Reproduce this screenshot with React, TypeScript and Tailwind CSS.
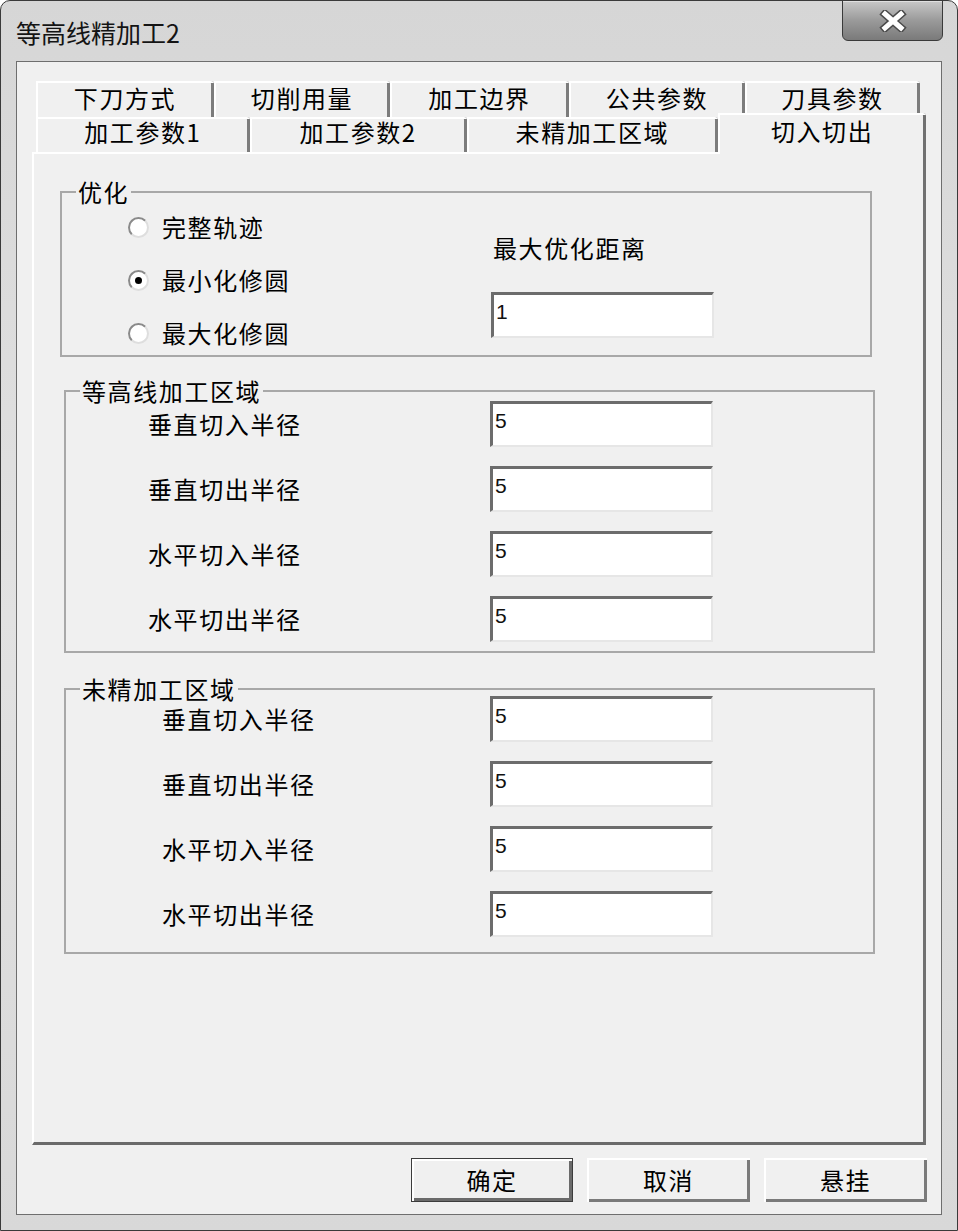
import React from 'react'

const cjk = '[font-family:"Noto_Sans_CJK_SC","Noto_Sans",sans-serif]'

// back row and front row of the tab strip
const backTabs = [
  { label: '下刀方式', w: 'w-[178px]' },
  { label: '切削用量', w: 'w-[176px]' },
  { label: '加工边界', w: 'w-[179px]' },
  { label: '公共参数', w: 'w-[176px]' },
  { label: '刀具参数', w: 'w-[175px]' },
]

const frontTabs = [
  { label: '加工参数1', w: 'w-[214px]' },
  { label: '加工参数2', w: 'w-[217px]' },
  { label: '未精加工区域', w: 'w-[252px]' },
]

const contourRows = ['垂直切入半径', '垂直切出半径', '水平切入半径', '水平切出半径']

function CloseIcon() {
  return (
    <svg width="32" height="22" viewBox="0 0 32 22">
      <path d="M8 4 L24 18 M24 4 L8 18" stroke="#4a4a4a" strokeWidth="8" strokeLinecap="square" />
      <path d="M8 4 L24 18 M24 4 L8 18" stroke="#ffffff" strokeWidth="5" strokeLinecap="square" />
    </svg>
  )
}

function Radio({ checked, label }: { checked?: boolean; label: string }) {
  return (
    <div className="flex items-center gap-[13px] h-[26px]">
      <div className="w-[21px] h-[21px] rounded-full bg-white border-2 border-t-[#8a8a8a] border-l-[#8a8a8a] border-r-[#dedede] border-b-[#dedede] flex items-center justify-center">
        {checked && <div className="w-[7px] h-[7px] rounded-full bg-black" />}
      </div>
      <span className="text-[24px] leading-[26px] tracking-[1.6px] text-black">{label}</span>
    </div>
  )
}

function Field({ value }: { value: string }) {
  return (
    <div className="w-[223px] h-[46px] bg-white border-t-[3px] border-l-[3px] border-t-[#6c6c6c] border-l-[#6c6c6c] border-r-2 border-b-2 border-r-[#e6e6e6] border-b-[#e6e6e6] pl-[2px] pt-[6px]">
      <span className="block text-[21px] leading-[21px] text-[#111] [font-family:'Liberation_Sans',sans-serif]">{value}</span>
    </div>
  )
}

function Legend({ children }: { children: React.ReactNode }) {
  return (
    <legend className="ml-[14px] px-[2px] text-[24px] leading-[26px] tracking-[1.6px] text-black">{children}</legend>
  )
}

function Button({ label, primary }: { label: string; primary?: boolean }) {
  return (
    <button
      className={
        'h-[44px] bg-[#f0f0f0] text-[24px] leading-none tracking-[1.6px] text-black flex items-center justify-center ' +
        (primary
          ? 'w-[162px] border border-[#3c3c3c] shadow-[inset_2px_2px_0_#ffffff,inset_-3px_-3px_0_#6a6a6a]'
          : 'w-[163px] shadow-[inset_2px_2px_0_#ffffff,inset_-3px_-3px_0_#7a7a7a]')
      }
    >
      {label}
    </button>
  )
}

export default function App() {
  return (
    <div className={`w-[958px] h-[1231px] bg-white ${cjk}`}>
      <div className="h-full flex flex-col rounded-t-[10px] border border-[#3a3a3a] bg-gradient-to-b from-[#d6d6d6] via-[#e2e2e2] to-[#d8d8d8]">
        {/* Title bar */}
        <div className="h-[60px] flex justify-between">
          <div className="pl-[15px] pt-[17px] text-[25px] leading-[28px] text-[#141414]">等高线精加工2</div>
          <div className="mr-[14px] -mt-px w-[101px] h-[41px] rounded-b-[6px] border border-[#3a3a3a] bg-gradient-to-b from-[#c8c8c8] via-[#9a9a9a] to-[#7a7a7a] flex items-center justify-center shadow-[inset_0_1px_0_#e0e0e0]">
            <CloseIcon />
          </div>
        </div>

        {/* Client area */}
        <div className="flex-1 mx-[15px] mb-[15px] border border-[#6e6e6e] bg-[#f0f0f0] flex flex-col">
          <div className="flex-1 flex flex-col mx-[15px] mt-[19px]">
            {/* Tabs */}
            <div className="pl-[4px]">
              <div className="flex h-[36px]">
                {backTabs.map((t) => (
                  <div
                    key={t.label}
                    className={`${t.w} h-full pb-[3px] flex items-center justify-center text-[24px] leading-none tracking-[1.6px] text-black bg-[#f0f0f0] rounded-tr-[3px] shadow-[inset_2px_2px_0_#ffffff,inset_-3px_0_0_#7c7c7c]`}
                  >
                    {t.label}
                  </div>
                ))}
              </div>
              <div className="flex h-[35px]">
                {frontTabs.map((t) => (
                  <div
                    key={t.label}
                    className={`${t.w} h-full pb-[6px] flex items-center justify-center text-[24px] leading-none tracking-[1.6px] text-black bg-[#f0f0f0] rounded-tr-[3px] shadow-[inset_2px_2px_0_#ffffff,inset_-3px_0_0_#7c7c7c]`}
                  >
                    {t.label}
                  </div>
                ))}
                <div className="relative z-10 self-end -mb-[2px] w-[208px] h-[41px] pb-[5px] flex items-center justify-center text-[24px] leading-none tracking-[1.6px] text-black bg-[#f0f0f0] rounded-tr-[3px] shadow-[inset_2px_2px_0_#ffffff,inset_-3px_0_0_#707070]">
                  切入切出
                </div>
              </div>
            </div>

            {/* Tab page */}
            <div className="flex-1 border-t-2 border-l-2 border-t-white border-l-white border-r-[3px] border-b-[3px] border-r-[#707070] border-b-[#6a6a6a]">
              {/* 优化 */}
              <fieldset className="mt-[25px] ml-[26px] mr-[51px] border-2 border-[#a8a8a8]">
                <Legend>优化</Legend>
                <div className="flex">
                  <div className="w-[429px] pl-[66px] pt-[9px] pb-[9px] flex flex-col gap-[27px]">
                    <Radio label="完整轨迹" />
                    <Radio label="最小化修圆" checked />
                    <Radio label="最大化修圆" />
                  </div>
                  <div className="pt-[30px] flex flex-col gap-[31px]">
                    <span className="pl-[2px] text-[24px] leading-[26px] tracking-[1.6px] text-black">最大优化距离</span>
                    <Field value="1" />
                  </div>
                </div>
              </fieldset>

              {/* 等高线加工区域 */}
              <fieldset className="mt-[21px] ml-[30px] mr-[48px] border-2 border-[#a8a8a8]">
                <Legend>等高线加工区域</Legend>
                <div className="-mt-[3px] pb-[9px] flex flex-col gap-[19px]">
                  {contourRows.map((r) => (
                    <div key={r} className="flex items-center">
                      <span className="w-[424px] pl-[82px] text-[24px] leading-[26px] tracking-[1.6px] text-black">{r}</span>
                      <Field value="5" />
                    </div>
                  ))}
                </div>
              </fieldset>

              {/* 未精加工区域 */}
              <fieldset className="mt-[23px] ml-[30px] mr-[48px] border-2 border-[#a8a8a8]">
                <Legend>未精加工区域</Legend>
                <div className="-mt-[6px] pb-[15px] flex flex-col gap-[19px]">
                  {contourRows.map((r) => (
                    <div key={r} className="flex items-center">
                      <span className="w-[424px] pl-[96px] text-[24px] leading-[26px] tracking-[1.6px] text-black">{r}</span>
                      <Field value="5" />
                    </div>
                  ))}
                </div>
              </fieldset>
            </div>
          </div>

          {/* Buttons */}
          <div className="h-[44px] mt-[13px] mb-[12px] mr-[14px] flex justify-end gap-[14px]">
            <Button label="确定" primary />
            <Button label="取消" />
            <Button label="悬挂" />
          </div>
        </div>
      </div>
    </div>
  )
}
